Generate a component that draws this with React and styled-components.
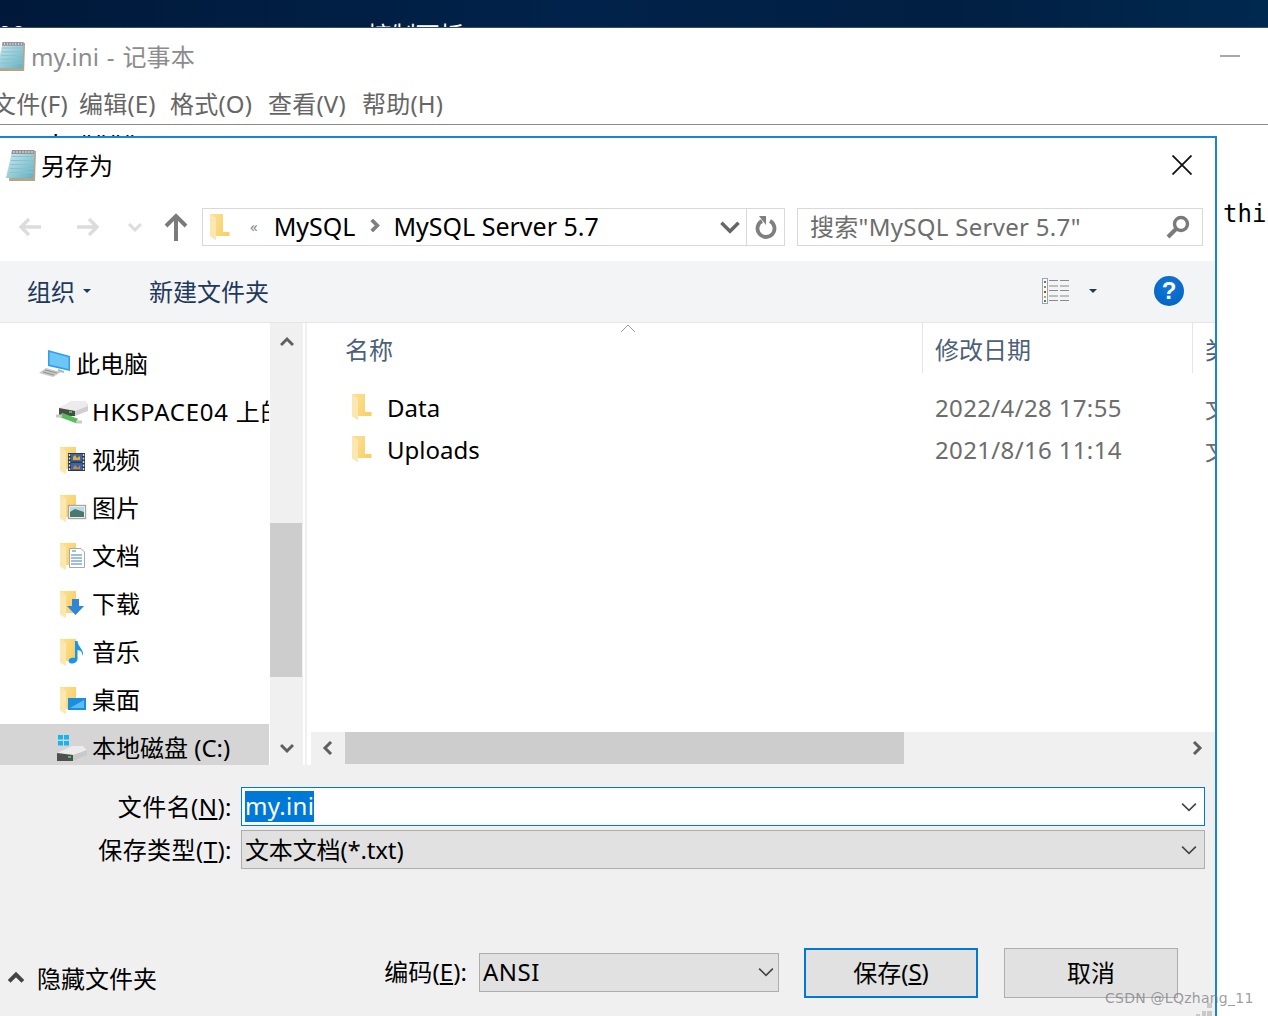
import React from 'react';
import styled, { createGlobalStyle } from 'styled-components';

const UI_FONT = '"Noto Sans", "Noto Sans CJK SC", sans-serif';

const GlobalStyle = createGlobalStyle`
  html, body {
    margin: 0;
    padding: 0;
    background: #fff;
  }
  body {
    font-family: ${UI_FONT};
    overflow: hidden;
  }
`;

const Page = styled.div`
  position: relative;
  width: 1268px;
  height: 1016px;
  overflow: hidden;
  display: flex;
  flex-direction: column;
  background: #fff;
`;

/* desktop strip behind the notepad */
const DesktopBar = styled.div`
  height: 28px;
  flex: none;
  overflow: hidden;
  display: flex;
  background: linear-gradient(90deg, #00193a 0%, #01224a 45%, #011f42 75%, #00294f 100%);
  border-bottom: 1px solid #3c4d60;
  color: #fff;
  font-size: 24px;
  line-height: 32px;
  padding-top: 19px;
  box-sizing: border-box;
`;

const DesktopLabel = styled.span`
  margin-left: ${(p) => p.$left}px;
  margin-top: ${(p) => p.$top || 0}px;
  white-space: nowrap;
`;

const NotepadTitle = styled.div`
  height: 57px;
  flex: none;
  box-sizing: border-box;
  padding-bottom: 2px;
  display: flex;
  align-items: center;
  color: #8c8c8c;
  font-size: 24px;
`;

const NotepadIconSlot = styled.div`
  margin-left: -4px;
  display: flex;
`;

const NotepadName = styled.span`
  margin-left: 5px;
  word-spacing: 1.5px;
  letter-spacing: 0.1px;
`;

const Minimize = styled.div`
  width: 20px;
  height: 2px;
  background: #a8a8a8;
  margin-left: auto;
  margin-right: 28px;
`;

const MenuBar = styled.div`
  height: 39px;
  flex: none;
  box-sizing: content-box;
  display: flex;
  align-items: center;
  margin-left: -8px;
  border-bottom: 1px solid #8a8a8a;
  color: #666;
  font-size: 24px;
  letter-spacing: 0.2px;
`;

const MenuItem = styled.span`
  width: ${(p) => p.$width}px;
  flex: none;
  white-space: nowrap;
  margin-bottom: 5px;
`;

const ClippedCode = styled.pre`
  height: 11px;
  flex: none;
  margin: 0;
  overflow: hidden;
  font-family: "DejaVu Sans Mono", monospace;
  font-size: 24px;
  line-height: 30px;
  padding: 5px 0 0 5px;
  color: #000;
  box-sizing: border-box;
`;

const EditorArea = styled.div`
  flex: 1;
  min-height: 0;
  display: flex;
`;

const CodeColumn = styled.div`
  flex: 1;
  padding: 60px 0 0 6px;
  font-family: "DejaVu Sans Mono", monospace;
  font-size: 24px;
  line-height: 36px;
  color: #000;
  white-space: nowrap;
  overflow: hidden;
`;

/* save-as dialog */
const Dialog = styled.div`
  width: 1217px;
  flex: none;
  box-sizing: border-box;
  border-top: 2px solid #1a82da;
  border-right: 2px solid #1a82da;
  background: #fff;
  display: flex;
  flex-direction: column;
  overflow: hidden;
`;

const DialogTitle = styled.div`
  height: 56px;
  flex: none;
  box-sizing: border-box;
  padding: 0 0 3px 5px;
  display: flex;
  align-items: center;
  color: #000;
  font-size: 24px;
`;

const DialogName = styled.span`
  margin-left: 4px;
`;

const CloseButton = styled.div`
  margin-left: auto;
  margin-right: 23px;
  display: flex;
`;

const NavBar = styled.div`
  height: 38px;
  flex: none;
  margin-top: 14px;
  display: flex;
  align-items: center;
`;

const NavArrow = styled.div`
  flex: none;
  display: flex;
  margin-left: ${(p) => p.$left}px;
`;

const AddressBox = styled.div`
  width: 545px;
  height: 38px;
  flex: none;
  margin-left: 14px;
  box-sizing: border-box;
  border: 1px solid #d9d9d9;
  display: flex;
  align-items: center;
  padding: 0 0 0 7px;
  font-size: 25px;
  color: #000;
`;

const Crumb = styled.span`
  margin-left: ${(p) => p.$left}px;
  white-space: nowrap;
  margin-bottom: 3px;
  display: flex;
`;

const CrumbSep = styled(Crumb)`
  color: #888;
  font-size: 15px;
`;

const AddressEnd = styled.div`
  margin-left: auto;
  margin-right: 6px;
  display: flex;
`;

const RefreshBox = styled.div`
  width: 38px;
  height: 38px;
  flex: none;
  box-sizing: border-box;
  border: 1px solid #d9d9d9;
  border-left: none;
  display: flex;
  align-items: center;
  justify-content: center;
`;

const SearchBox = styled.div`
  width: 406px;
  height: 38px;
  flex: none;
  margin-left: 12px;
  box-sizing: border-box;
  border: 1px solid #d9d9d9;
  display: flex;
  align-items: center;
  justify-content: space-between;
  padding: 0 12px;
  color: #6d6d6d;
  font-size: 24px;
  white-space: nowrap;
`;

const SearchText = styled.span`
  letter-spacing: 0.3px;
  margin-bottom: 3px;
`;

const CommandBar = styled.div`
  height: 61px;
  flex: none;
  margin-top: 15px;
  box-sizing: content-box;
  background: #f3f4f6;
  border-bottom: 1px solid #e5e6e8;
  display: flex;
  align-items: center;
  padding-left: 27px;
  color: #1e395b;
  font-size: 24px;
`;

const CommandItem = styled.div`
  display: flex;
  align-items: center;
  gap: 8px;
  margin-left: ${(p) => p.$left || 0}px;
  margin-bottom: 2px;
`;

const Caret = styled.span`
  width: 0;
  height: 0;
  border-left: 4px solid transparent;
  border-right: 4px solid transparent;
  border-top: 4px solid ${(p) => p.$color || '#1e395b'};
  flex: none;
`;

const ViewGroup = styled.div`
  margin-left: auto;
  display: flex;
  align-items: center;
  gap: 19px;
  margin-bottom: 2px;
`;

const HelpBadge = styled.div`
  width: 30px;
  height: 30px;
  margin: 0 31px 0 38px;
  border-radius: 50%;
  background: radial-gradient(circle at 50% 35%, #1377d8 0%, #0062bd 100%);
  color: #fff;
  font-family: "Liberation Sans", sans-serif;
  font-size: 24px;
  font-weight: 700;
  line-height: 30px;
  text-align: center;
`;

const Body = styled.div`
  height: 442px;
  flex: none;
  display: flex;
`;

const NavPane = styled.div`
  width: 269px;
  flex: none;
  overflow: hidden;
  padding-top: 17px;
  box-sizing: border-box;
  margin-right: 1px;
`;

const NavRow = styled.div`
  height: 48px;
  display: flex;
  align-items: center;
  gap: 5px;
  padding-left: ${(p) => p.$left}px;
  background: ${(p) => (p.$selected ? '#d5d5d5' : 'transparent')};
  color: #000;
  font-size: 24px;
  white-space: nowrap;
`;

const NavLabel = styled.span`
  margin-bottom: 4px;
`;

const ShareLabel = styled(NavLabel)`
  margin-left: -1px;
  letter-spacing: 0.75px;
`;

const VScroll = styled.div`
  width: 33px;
  flex: none;
  background: #f0f0f0;
  display: flex;
  flex-direction: column;
`;

const VArrow = styled.div`
  height: 38px;
  flex: none;
  box-sizing: border-box;
  padding-top: ${(p) => p.$pad || 0}px;
  display: flex;
  align-items: center;
  justify-content: center;
`;

const VThumb = styled.div`
  height: 154px;
  flex: none;
  margin-top: 162px;
  margin-right: 1px;
  background: #cdcdcd;
`;

const VFill = styled.div`
  flex: 1;
`;

const PaneSplit = styled.div`
  width: 8px;
  flex: none;
  background: linear-gradient(90deg, #fff 0 2px, #f0f0f0 2px 4px, #fff 4px);
`;

const FilePane = styled.div`
  flex: 1;
  min-width: 0;
  display: flex;
  flex-direction: column;
  overflow: hidden;
`;

const ColumnsGrid = styled.div`
  display: grid;
  grid-template-columns: 612px 270px 1fr;
`;

const HeaderRow = styled(ColumnsGrid)`
  position: relative;
  height: 52px;
  flex: none;
  margin-bottom: 11px;
  color: #4c607a;
  font-size: 24px;
`;

const HeaderCell = styled.div`
  box-sizing: border-box;
  height: 50px;
  padding-left: ${(p) => p.$left}px;
  line-height: 54px;
  border-right: ${(p) => (p.$last ? 'none' : '1px solid #e5e5e5')};
  white-space: nowrap;
  overflow: hidden;
`;

const SortArrow = styled.svg`
  position: absolute;
  left: 309px;
  top: 0;
`;

const FileRow = styled(ColumnsGrid)`
  height: 42px;
  flex: none;
  align-items: center;
  font-size: 24px;
`;

const FileName = styled.div`
  display: flex;
  align-items: center;
  gap: 15px;
  padding-left: 41px;
  color: #000;
`;

const FileMeta = styled.div`
  padding-left: 12px;
  color: #6d6d6d;
  letter-spacing: 0.35px;
  white-space: nowrap;
  overflow: hidden;
`;

const HScroll = styled.div`
  height: 33px;
  flex: none;
  margin-top: auto;
  background: #f0f0f0;
  display: flex;
  align-items: stretch;
`;

const HArrow = styled.div`
  width: 34px;
  flex: none;
  box-sizing: border-box;
  padding-bottom: 2px;
  display: flex;
  align-items: center;
  justify-content: center;
  margin-left: ${(p) => (p.$end ? 'auto' : '0')};
  margin-right: ${(p) => (p.$end ? '1px' : '0')};
`;

const HThumb = styled.div`
  width: 559px;
  flex: none;
  margin-bottom: 1px;
  background: #cdcdcd;
`;

const Footer = styled.div`
  flex: 1;
  background: #f0f0f0;
  padding-top: 22px;
  display: flex;
  flex-direction: column;
  color: #000;
  font-size: 24px;
`;

const FieldRow = styled.div`
  display: grid;
  grid-template-columns: 232px 1fr;
  column-gap: 9px;
  align-items: center;
  padding-right: 10px;
  margin-bottom: 4px;
`;

const FieldLabel = styled.label`
  text-align: right;
  white-space: nowrap;
  letter-spacing: 0.45px;
  margin-bottom: 2px;
`;

const Field = styled.div`
  height: 39px;
  box-sizing: border-box;
  display: flex;
  align-items: center;
  justify-content: space-between;
  padding: 0 7px 0 3px;
  border: 1px solid ${(p) => (p.$active ? '#0078d7' : '#adadad')};
  background: ${(p) => (p.$active ? '#fff' : '#e1e1e1')};
`;

const FieldText = styled.span`
  margin-bottom: 2px;
  letter-spacing: ${(p) => p.$spacing || 0}px;
`;

const Selection = styled.span`
  background: #0078d7;
  color: #fff;
  height: 31px;
  line-height: 29px;
  letter-spacing: 0.3px;
`;

const BottomRow = styled.div`
  display: flex;
  align-items: center;
  margin-top: 75px;
  padding: 0 37px 0 8px;
`;

const HideToggle = styled.div`
  display: flex;
  align-items: center;
  gap: 13px;
  margin-top: 9px;
`;

const EncodingGroup = styled.div`
  margin-left: auto;
  margin-bottom: 2px;
  display: flex;
  align-items: center;
  gap: 12px;
`;

const EncodingLabel = styled.span`
  margin-bottom: 3px;
  letter-spacing: 0.1px;
`;

const EncodingSelect = styled(Field)`
  width: 300px;
  padding: 0 4px 0 3px;
`;

const ActionButton = styled.div`
  width: 174px;
  height: 50px;
  flex: none;
  box-sizing: border-box;
  margin-left: ${(p) => p.$left}px;
  padding-bottom: 3px;
  display: flex;
  align-items: center;
  justify-content: center;
  white-space: pre;
  background: #e1e1e1;
  border: ${(p) => (p.$primary ? '2px solid #0078d7' : '1px solid #adadad')};
`;

const Watermark = styled.div`
  position: absolute;
  left: 1105px;
  top: 989px;
  font-family: "DejaVu Sans", sans-serif;
  font-size: 14px;
  line-height: 18px;
  letter-spacing: 0.25px;
  color: rgba(125, 125, 125, 0.75);
  white-space: nowrap;
`;

const Grip = styled.svg`
  position: absolute;
  left: 1196px;
  top: 1003px;
`;

// icons

const NotepadIcon = ({ size = 32, id }) => (
  <svg width={size} height={size} viewBox="0 0 32 32" style={{ flex: 'none' }}>
    <defs>
      <linearGradient id={id} x1="0" y1="0" x2="1" y2="1">
        <stop offset="0" stopColor="#d3ecf1" />
        <stop offset="1" stopColor="#5fb0c2" />
      </linearGradient>
    </defs>
    <path d="M7 2H31L30 32H4Z" fill="#b3a58a" />
    <path d="M7 2H29.5L28 29H1Z" fill={`url(#${id})`} />
    <path d="M6.5 7.5H29M6 11.5H28.8M5.5 15.5H28.6M5 19.5H28.4M4.5 23.5H28.2" stroke="#8cc0cd" strokeWidth="1" />
    <path d="M7 1H29.5L29 5H6.5Z" fill="#8f9498" />
    <path d="M9 2V4M12 2V4M15 2V4M18 2V4M21 2V4M24 2V4M27 2V4" stroke="#e8e8e8" strokeWidth="1" />
  </svg>
);

const Folder = ({ id, width = 20, height = 26 }) => (
  <svg width={width} height={height} viewBox="0 0 20 26" style={{ flex: 'none' }}>
    <defs>
      <linearGradient id={id} x1="0" y1="0" x2="1" y2="0.6">
        <stop offset="0" stopColor="#fce29a" />
        <stop offset="1" stopColor="#f8d064" />
      </linearGradient>
    </defs>
    <path d="M0 0H13V18H19.5V22H6V26L0 22Z" fill={`url(#${id})`} />
    <path d="M0 0L6 4V26L0 22Z" fill="#fbe7b0" />
  </svg>
);

const LeftArrow = ({ color }) => (
  <svg width="24" height="20" viewBox="0 0 24 20">
    <path d="M23 10H3M11 2L3 10L11 18" fill="none" stroke={color} strokeWidth="3.4" />
  </svg>
);

const RightArrow = ({ color }) => (
  <svg width="24" height="20" viewBox="0 0 24 20">
    <path d="M1 10H21M13 2L21 10L13 18" fill="none" stroke={color} strokeWidth="3.4" />
  </svg>
);

const UpArrow = () => (
  <svg width="24" height="28" viewBox="0 0 24 28">
    <path d="M12 28V4M2 13L12 3L22 13" fill="none" stroke="#7b7b7b" strokeWidth="4" />
  </svg>
);

const Chevron = ({ dir = 'down', size = 14, color = '#5f5f5f', weight = 3 }) => {
  const rotate = { down: 0, up: 180, left: 90, right: -90 }[dir];
  return (
    <svg width={size} height={size} viewBox="0 0 14 14" style={{ transform: `rotate(${rotate}deg)`, flex: 'none' }}>
      <path d="M1 4L7 10L13 4" fill="none" stroke={color} strokeWidth={weight} />
    </svg>
  );
};

const RefreshIcon = () => (
  <svg width="22" height="26" viewBox="0 0 22 26">
    <path d="M7 7A8.5 8.5 0 1 0 15 7" fill="none" stroke="#7f7f7f" strokeWidth="3.8" />
    <path d="M4 2L11 2V11Z" fill="#7f7f7f" />
  </svg>
);

const SearchIcon = () => (
  <svg width="24" height="24" viewBox="0 0 24 24">
    <circle cx="15" cy="9" r="6.5" fill="none" stroke="#7a7a7a" strokeWidth="3.4" />
    <path d="M10 14L2 22" stroke="#7a7a7a" strokeWidth="4" />
  </svg>
);

const CloseIcon = () => (
  <svg width="20" height="20" viewBox="0 0 20 20">
    <path d="M0.5 0.5L19.5 19.5M19.5 0.5L0.5 19.5" stroke="#111" strokeWidth="1.8" />
  </svg>
);

const ViewIcon = () => (
  <svg width="28" height="26" viewBox="0 0 28 26">
    <rect x="0.5" y="0.5" width="5" height="25" fill="#fff" stroke="#a3a3a3" />
    <rect x="2" y="3" width="2" height="2" fill="#3a7fb5" />
    <rect x="2" y="8" width="2" height="2" fill="#a08a3a" />
    <rect x="2" y="13" width="2" height="2" fill="#c03a2a" />
    <rect x="2" y="18" width="2" height="2" fill="#a8a850" />
    <rect x="2" y="22" width="2" height="2" fill="#3a7fb5" />
    <path d="M7 2.5H16M18 2.5H27M7 8H16M18 8H27M7 12.5H16M18 12.5H27M7 18H16M18 18H27M7 22.5H16M18 22.5H27" stroke="#8a8a8a" strokeWidth="1" />
  </svg>
);

const PcIcon = () => (
  <svg width="32" height="28" viewBox="0 0 32 28" style={{ flex: 'none' }}>
    <path d="M9 0L31 6V21L9 16Z" fill="#2f9fe8" />
    <path d="M10.5 2L29.5 7.2V19L10.5 14.5Z" fill="#6cc7f7" />
    <path d="M19 19L25 21V23L19 21.5Z" fill="#b5b5b5" />
    <path d="M7 18L22 22L14 27L0 23Z" fill="#c9c9c9" />
    <path d="M6 20L18 23M4 22L15 25" stroke="#8f8f8f" strokeWidth="1" />
  </svg>
);

const NetDriveIcon = () => (
  <svg width="32" height="24" viewBox="0 0 32 24" style={{ flex: 'none' }}>
    <path d="M3 8L16 1H29L32 5V11L19 16H3Z" fill="#cfcfcf" />
    <path d="M16 1H29L32 6L19 11L3 8Z" fill="#ececec" />
    <path d="M3 8L19 11V16H3Z" fill="#4a4a4a" />
    <rect x="13" y="11" width="3" height="2" fill="#34c940" />
    <path d="M5 15L21 21" stroke="#58bb5c" strokeWidth="5" />
    <path d="M0 16H6M20 22H26" stroke="#c9c9c9" strokeWidth="3" />
  </svg>
);

const LocalDriveIcon = () => (
  <svg width="30" height="26" viewBox="0 0 30 26" style={{ flex: 'none' }}>
    <rect x="1" y="0" width="5" height="4.5" fill="#19b3f0" />
    <rect x="7" y="0" width="5" height="4.5" fill="#19b3f0" />
    <rect x="1" y="6" width="5" height="4.5" fill="#19b3f0" />
    <rect x="7" y="6" width="5" height="4.5" fill="#19b3f0" />
    <path d="M0 18L15 11H26L30 14V20L16 26H0Z" fill="#c9c9c9" />
    <path d="M15 11H26L30 15L16 20L0 18Z" fill="#ececec" />
    <path d="M0 18L16 20V26H0Z" fill="#4f4f4f" />
    <rect x="11" y="21" width="3" height="2" fill="#35d04a" />
  </svg>
);

const overlays = {
  video: (
    <>
      <rect x="8" y="7" width="17" height="18" fill="#2c3b4a" />
      <rect x="11" y="8" width="11" height="7.5" fill="#3c63b0" />
      <rect x="11" y="17" width="11" height="7" fill="#3c63b0" />
      <path d="M13 11L15 9L17 12L20 10V14H13Z" fill="#e5b020" />
      <path d="M13 22L15 19L18 22L20 19V23H13Z" fill="#d08a20" />
      <path d="M9.5 8V25M23.5 8V25" stroke="#dcdcdc" strokeWidth="1.4" strokeDasharray="2 1.5" />
    </>
  ),
  pictures: (
    <>
      <rect x="8.5" y="11.5" width="17" height="13" fill="#fff" stroke="#a5a5a5" strokeWidth="1.4" />
      <rect x="10" y="13" width="14" height="5" fill="#bcd9e6" />
      <path d="M10 18L15 15L24 18V23H10Z" fill="#47796f" />
    </>
  ),
  documents: (
    <>
      <path d="M9.5 6.5H21L24.5 10V25.5H9.5Z" fill="#fff" stroke="#a8a8a8" />
      <path d="M12 9H16M11 13H22M11 16H22M11 19H22M11 22H22" stroke="#3f7fb5" strokeWidth="1.2" />
    </>
  ),
  downloads: <path d="M12 9H19V16H24L15.5 25L7 16H12Z" fill="#2d86d8" />,
  music: (
    <path d="M15 3H17.5C18 9 24 11 23 18L21 13L17.5 12V21C17.5 24 14 26 11 25.5C7.5 24.5 8 21 11 20C12.5 19.5 14 19.5 15 20Z" fill="#1b95e6" />
  ),
  desktop: (
    <>
      <rect x="8" y="12" width="18" height="12" fill="#1a8fe0" />
      <path d="M10 22L24 14V22Z" fill="#5cbcf5" />
    </>
  ),
};

const LibraryIcon = ({ kind }) => (
  <svg width="29" height="28" viewBox="0 0 29 28" style={{ flex: 'none' }}>
    <defs>
      <linearGradient id={`lib-${kind}`} x1="0" y1="0" x2="1" y2="0.5">
        <stop offset="0" stopColor="#fce29a" />
        <stop offset="1" stopColor="#f8d064" />
      </linearGradient>
    </defs>
    <path d="M2 1H18V23H8V28L2 24Z" fill={`url(#lib-${kind})`} />
    <path d="M2 1L8 5V28L2 24Z" fill="#fbe7b0" />
    <g transform="translate(2 0)">{overlays[kind]}</g>
  </svg>
);

const navItems = [
  { kind: 'video', label: '视频' },
  { kind: 'pictures', label: '图片' },
  { kind: 'documents', label: '文档' },
  { kind: 'downloads', label: '下载' },
  { kind: 'music', label: '音乐' },
  { kind: 'desktop', label: '桌面' },
];

const files = [
  { name: 'Data', date: '2022/4/28 17:55', type: '文件夹' },
  { name: 'Uploads', date: '2021/8/16 11:14', type: '文件夹' },
];

const App = () => {
  return (
    <Page>
      <GlobalStyle />
      <DesktopBar>
        <DesktopLabel $left={-2} $top={-1}>00</DesktopLabel>
        <DesktopLabel $left={342}>控制面板</DesktopLabel>
      </DesktopBar>
      <NotepadTitle>
        <NotepadIconSlot>
          <NotepadIcon id="note-app" size={30} />
        </NotepadIconSlot>
        <NotepadName>my.ini - 记事本</NotepadName>
        <Minimize />
      </NotepadTitle>
      <MenuBar>
        <MenuItem $width={87}>文件(F)</MenuItem>
        <MenuItem $width={91}>编辑(E)</MenuItem>
        <MenuItem $width={98}>格式(O)</MenuItem>
        <MenuItem $width={94}>查看(V)</MenuItem>
        <MenuItem $width={90}>帮助(H)</MenuItem>
      </MenuBar>
      <ClippedCode>{'   i ####'}</ClippedCode>
      <EditorArea>
        <Dialog>
          <DialogTitle>
            <NotepadIcon id="note-dialog" />
            <DialogName>另存为</DialogName>
            <CloseButton>
              <CloseIcon />
            </CloseButton>
          </DialogTitle>
          <NavBar>
            <NavArrow $left={18}>
              <LeftArrow color="#dcdcdc" />
            </NavArrow>
            <NavArrow $left={34}>
              <RightArrow color="#dcdcdc" />
            </NavArrow>
            <NavArrow $left={28}>
              <Chevron color="#dcdcdc" weight={3} />
            </NavArrow>
            <NavArrow $left={22}>
              <UpArrow />
            </NavArrow>
            <AddressBox>
              <Folder id="folder-address" />
              <CrumbSep $left={20}>«</CrumbSep>
              <Crumb $left={16}>MySQL</Crumb>
              <Crumb $left={13}>
                <Chevron dir="right" size={13} color="#7f7f7f" weight={4} />
              </Crumb>
              <Crumb $left={12}>MySQL Server 5.7</Crumb>
              <AddressEnd>
                <Chevron size={20} color="#666" weight={2.4} />
              </AddressEnd>
            </AddressBox>
            <RefreshBox>
              <RefreshIcon />
            </RefreshBox>
            <SearchBox>
              <SearchText>搜索"MySQL Server 5.7"</SearchText>
              <SearchIcon />
            </SearchBox>
          </NavBar>
          <CommandBar>
            <CommandItem>
              组织
              <Caret />
            </CommandItem>
            <CommandItem $left={58}>新建文件夹</CommandItem>
            <ViewGroup>
              <ViewIcon />
              <Caret />
              <HelpBadge>?</HelpBadge>
            </ViewGroup>
          </CommandBar>
          <Body>
            <NavPane>
              <NavRow $left={39}>
                <PcIcon />
                <NavLabel>此电脑</NavLabel>
              </NavRow>
              <NavRow $left={56}>
                <NetDriveIcon />
                <ShareLabel>HKSPACE04 上的 mysql</ShareLabel>
              </NavRow>
              {navItems.map((item) => (
                <NavRow key={item.kind} $left={58}>
                  <LibraryIcon kind={item.kind} />
                  <NavLabel>{item.label}</NavLabel>
                </NavRow>
              ))}
              <NavRow $left={57} $selected>
                <LocalDriveIcon />
                <NavLabel>本地磁盘 (C:)</NavLabel>
              </NavRow>
            </NavPane>
            <VScroll>
              <VArrow>
                <Chevron dir="up" size={14} color="#5f5f5f" weight={3} />
              </VArrow>
              <VThumb />
              <VFill />
              <VArrow $pad={4}>
                <Chevron size={14} color="#5f5f5f" weight={3} />
              </VArrow>
            </VScroll>
            <PaneSplit />
            <FilePane>
              <HeaderRow>
                <HeaderCell $left={34}>名称</HeaderCell>
                <HeaderCell $left={12}>修改日期</HeaderCell>
                <HeaderCell $left={12} $last>类型</HeaderCell>
                <SortArrow width="16" height="10" viewBox="0 0 16 10">
                  <path d="M1 9L8 2L15 9" fill="none" stroke="#9a9a9a" strokeWidth="1" />
                </SortArrow>
              </HeaderRow>
              {files.map((file) => (
                <FileRow key={file.name}>
                  <FileName>
                    <Folder id={`folder-${file.name}`} />
                    {file.name}
                  </FileName>
                  <FileMeta>{file.date}</FileMeta>
                  <FileMeta>{file.type}</FileMeta>
                </FileRow>
              ))}
              <HScroll>
                <HArrow>
                  <Chevron dir="left" size={14} color="#5f5f5f" weight={3} />
                </HArrow>
                <HThumb />
                <HArrow $end>
                  <Chevron dir="right" size={14} color="#5f5f5f" weight={3} />
                </HArrow>
              </HScroll>
            </FilePane>
          </Body>
          <Footer>
            <FieldRow>
              <FieldLabel>文件名(<u>N</u>):</FieldLabel>
              <Field $active>
                <Selection>my.ini</Selection>
                <Chevron size={16} color="#444" weight={1.4} />
              </Field>
            </FieldRow>
            <FieldRow>
              <FieldLabel>保存类型(<u>T</u>):</FieldLabel>
              <Field>
                <FieldText $spacing={-0.15}>文本文档(*.txt)</FieldText>
                <Chevron size={16} color="#444" weight={1.4} />
              </Field>
            </FieldRow>
            <BottomRow>
              <HideToggle>
                <Chevron dir="up" size={16} color="#444" weight={3.4} />
                隐藏文件夹
              </HideToggle>
              <EncodingGroup>
                <EncodingLabel>编码(<u>E</u>):</EncodingLabel>
                <EncodingSelect>
                  <FieldText $spacing={0.5}>ANSI</FieldText>
                  <Chevron size={16} color="#444" weight={1.4} />
                </EncodingSelect>
              </EncodingGroup>
              <ActionButton $primary $left={25}>保存(<u>S</u>)</ActionButton>
              <ActionButton $left={26}>取消</ActionButton>
            </BottomRow>
          </Footer>
        </Dialog>
        <CodeColumn>thi</CodeColumn>
      </EditorArea>
      <Grip width="16" height="13" viewBox="0 0 16 13">
        <path d="M11 0h5v5h-5zM6 8h4v5H6zM11 8h5v5h-5zM0 11h4v2H0z" fill="#c9c9c9" />
      </Grip>
      <Watermark>CSDN @LQzhang_11</Watermark>
    </Page>
  );
};

export default App;
